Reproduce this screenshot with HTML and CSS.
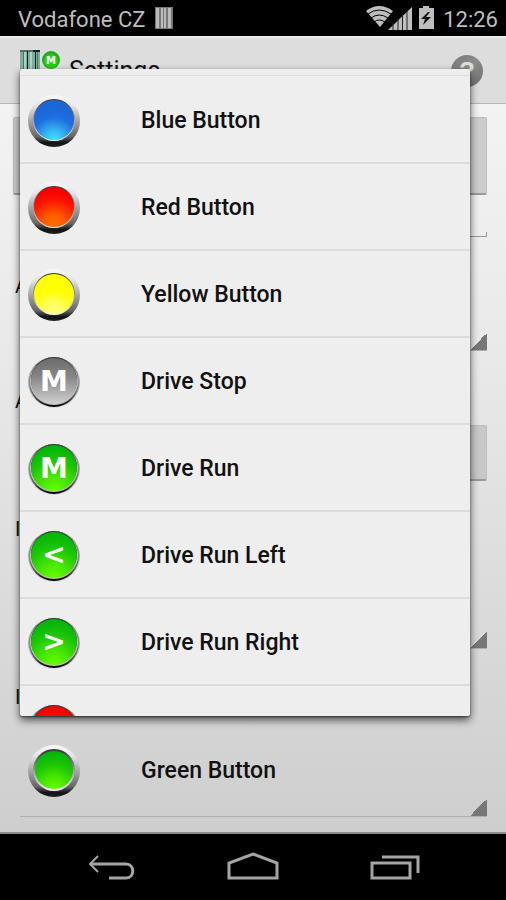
FILE: index.html
```html
<!DOCTYPE html>
<html lang="en">
<head>
<meta charset="utf-8">
<meta name="viewport" content="width=device-width, initial-scale=1">
<title>Settings</title>
<link rel="stylesheet" href="styles.css">
</head>
<body>
<svg class="defs" aria-hidden="true">
  <defs>
    <linearGradient id="rim" x1="0" y1="0" x2="0" y2="1">
      <stop offset="0" stop-color="#f8f8f8"/><stop offset=".2" stop-color="#e6e6e6"/><stop offset=".55" stop-color="#9a9a9a"/><stop offset=".8" stop-color="#666"/><stop offset=".92" stop-color="#111"/><stop offset="1" stop-color="#222"/>
    </linearGradient>
    <linearGradient id="bevel" x1="0" y1="0" x2="0" y2="1">
      <stop offset="0" stop-color="#333"/><stop offset=".5" stop-color="#999"/><stop offset="1" stop-color="#f4f4f4"/>
    </linearGradient>
    <linearGradient id="thin" x1="0" y1="0" x2="0" y2="1">
      <stop offset="0" stop-color="#eee"/><stop offset=".5" stop-color="#aaa"/><stop offset="1" stop-color="#ddd"/>
    </linearGradient>
    <linearGradient id="edge" x1="0" y1="0" x2="0" y2="1">
      <stop offset="0" stop-color="#222"/><stop offset=".5" stop-color="#888"/><stop offset=".8" stop-color="#555"/><stop offset="1" stop-color="#000"/>
    </linearGradient>
    <radialGradient id="blue" cx=".5" cy="1" r=".8">
      <stop offset="0" stop-color="#3fe0ff"/><stop offset=".25" stop-color="#38c0f5"/><stop offset=".7" stop-color="#1f6fe0"/><stop offset="1" stop-color="#1c66d8"/>
    </radialGradient>
    <radialGradient id="red" cx=".5" cy="1" r=".9">
      <stop offset="0" stop-color="#ff7200"/><stop offset=".35" stop-color="#ff5a00"/><stop offset=".75" stop-color="#fe1400"/><stop offset="1" stop-color="#fa0000"/>
    </radialGradient>
    <radialGradient id="yellow" cx=".5" cy="1" r=".8">
      <stop offset="0" stop-color="#ffff90"/><stop offset=".4" stop-color="#ffff50"/><stop offset=".75" stop-color="#ffff00"/><stop offset="1" stop-color="#ffff00"/>
    </radialGradient>
    <radialGradient id="green" cx=".5" cy="1" r="1">
      <stop offset="0" stop-color="#66ff00"/><stop offset=".3" stop-color="#4be800"/><stop offset=".65" stop-color="#1cc604"/><stop offset="1" stop-color="#00b20c"/>
    </radialGradient>
    <linearGradient id="gray" x1="0" y1="0" x2="0" y2="1">
      <stop offset="0" stop-color="#6c6c6c"/><stop offset=".4" stop-color="#858585"/><stop offset="1" stop-color="#d0d0d0"/>
    </linearGradient>
    <linearGradient id="help" x1="0" y1="0" x2="1" y2="1">
      <stop offset="0" stop-color="#777"/><stop offset=".5" stop-color="#8c8c8c"/><stop offset="1" stop-color="#6c6c6c"/>
    </linearGradient>
    <g id="push">
      <circle cx="27" cy="27" r="26" fill="url(#rim)"/>
      <circle cx="27" cy="26" r="21" fill="url(#bevel)"/>
    </g>
    <g id="flat">
      <circle cx="27" cy="27" r="26" fill="url(#thin)"/>
      <circle cx="27" cy="27" r="25" fill="url(#edge)"/>
      <circle cx="27" cy="26" r="24" fill="#c4c4c4"/>
      <circle cx="27" cy="25" r="23" fill="#333"/>
    </g>
  </defs>
</svg>

<div class="screen">
  <header class="status">
    <span>Vodafone CZ</span>
    <svg class="barcode" width="18" height="22" viewBox="0 0 18 22" aria-hidden="true">
      <path fill="#777" d="M0 0h18v22H0z"/><path fill="#bbb" d="M1 1h3v20H1zM6 1h2v20H6zM9 1h2v20H9zM13 1h3v20h-3z"/>
    </svg>
    <svg class="signals" width="70" height="26" viewBox="0 0 70 26" aria-hidden="true">
      <path fill="#bebebe" d="M0 6Q13-4 27 6L14 22z"/>
      <path fill="none" stroke="#000" stroke-width="1" d="M2 9q11-8 23 0M5 13q8-6 17 0M8 17q5-4 11 0"/>
      <path fill="#bebebe" d="M22 25 46 2v23z"/>
      <path stroke="#222" stroke-width="1" d="M27 25v-8M32 25V13M36.500 25V9M41 25V5"/>
      <path fill="#bebebe" d="M53 3h4V1h6v2h5v21H53z"/>
      <path fill="#111" d="m62 7-7 7h4l-2 6 8-8h-5l4-5z"/>
    </svg>
    <time>12:26</time>
  </header>

  <div class="actionbar">
    <svg width="44" height="48" viewBox="0 0 44 48" aria-hidden="true">
      <path fill="#7fae9c" d="M0 3h20v42H0z"/>
      <path fill="#4d7566" d="M0 3h20v2H0zM3 5h1v40H3zM17 5h1v40h-1z"/>
      <path fill="#a8d5c4" d="M4 5h2v40H4zM10 5h2v40h-2z"/>
      <path fill="#14211c" d="M7 4h1v41H7zM13 3h7v2h-4v40h-1V5h-2z"/>
      <circle cx="31" cy="13" r="9" fill="#21ad1b"/><circle cx="31" cy="14" r="7" fill="#25cf12"/>
      <text class="tiny-mark" x="31" y="17">M</text>
    </svg>
    <h1>Settings</h1>
    <button class="help" type="button" aria-label="Help">
      <svg width="32" height="32" viewBox="0 0 32 32"><circle cx="16" cy="16" r="16" fill="url(#help)"/><text class="help-mark" x="16" y="25">?</text></svg>
    </button>
  </div>

  <form class="form">
    <button class="bar tall" type="button" aria-label="Action"></button>
    <input class="field" type="text" aria-label="Value">
    <label for="s1">A</label>
    <select class="spinner first" id="s1"></select>
    <label for="b2">A</label>
    <button class="bar inset" id="b2" type="button"></button>
    <label class="lower" for="s2">I</label>
    <select class="spinner second" id="s2"></select>
    <label for="s3">I</label>
    <div class="choice">
      <svg class="icon" viewBox="0 0 54 54" aria-hidden="true"><use href="#push"/><circle cx="27" cy="26" r="19" fill="url(#green)"/></svg>
      <select class="choice-select" id="s3"><option>Green Button</option></select>
    </div>
  </form>

  <nav class="navbar" aria-label="System">
    <button type="button" aria-label="Back"><svg width="54" height="32" viewBox="0 0 54 32"><path d="M6 12h36c9 0 9 14 0 14H25" stroke-width="3"/><path d="m14 4-8 8 8 8" stroke-width="2"/></svg></button>
    <button type="button" aria-label="Home"><svg width="54" height="32" viewBox="0 0 54 32"><path d="M3 26V11l24-9 24 9v15z" stroke-width="3"/></svg></button>
    <button type="button" aria-label="Recent apps"><svg width="54" height="32" viewBox="0 0 54 32"><path d="M4 11h38v15H4zM14 5h36v16" stroke-width="3"/></svg></button>
  </nav>

  <div class="popup" role="listbox" aria-label="Button type">
    <button class="row" type="button" role="option"><svg class="icon" viewBox="0 0 54 54"><use href="#push"/><circle cx="27" cy="26" r="20" fill="url(#blue)"/></svg>Blue Button</button>
    <button class="row" type="button" role="option"><svg class="icon" viewBox="0 0 54 54"><use href="#push"/><circle cx="27" cy="26" r="20" fill="url(#red)"/></svg>Red Button</button>
    <button class="row" type="button" role="option"><svg class="icon" viewBox="0 0 54 54"><use href="#push"/><circle cx="27" cy="26" r="20" fill="url(#yellow)"/></svg>Yellow Button</button>
    <button class="row" type="button" role="option"><svg class="icon" viewBox="0 0 54 54"><use href="#flat"/><circle cx="27" cy="26" r="23" fill="url(#gray)"/><text class="mark" x="27" y="36">M</text></svg>Drive Stop</button>
    <button class="row" type="button" role="option"><svg class="icon" viewBox="0 0 54 54"><use href="#flat"/><circle cx="27" cy="26" r="23" fill="url(#green)"/><text class="mark" x="27" y="36">M</text></svg>Drive Run</button>
    <button class="row" type="button" role="option"><svg class="icon" viewBox="0 0 54 54"><use href="#flat"/><circle cx="27" cy="26" r="23" fill="url(#green)"/><text class="mark" x="27" y="35">&lt;</text></svg>Drive Run Left</button>
    <button class="row" type="button" role="option"><svg class="icon" viewBox="0 0 54 54"><use href="#flat"/><circle cx="27" cy="26" r="23" fill="url(#green)"/><text class="mark" x="27" y="35">&gt;</text></svg>Drive Run Right</button>
    <button class="row" type="button" role="option" aria-label="Red drive"><svg class="icon" viewBox="0 0 54 54"><use href="#flat"/><circle cx="27" cy="26" r="23" fill="url(#red)"/></svg></button>
  </div>
</div>
</body>
</html>
```
FILE: styles.css
```css
* { box-sizing: border-box; }

body {
  margin: 0;
  font-family: Roboto, "Liberation Sans", sans-serif;
  color: #111;
}

button, select, input { font: inherit; color: inherit; border: 0; padding: 0; border-radius: 0; }
svg { display: block; flex: none; }
.defs { position: absolute; width: 0; height: 0; }

.screen {
  position: relative;
  display: flex;
  flex-direction: column;
  min-height: 100vh;
  background: #000;
}

.status {
  display: flex;
  align-items: center;
  height: 36px;
  padding: 0 8px 0 18px;
  color: #bebebe;
  font-size: 22px;
}
.status span, .status time { padding-top: 2px; }
.barcode { margin-left: 10px; }
.signals { margin-left: auto; margin-right: 7px; }

.actionbar {
  display: flex;
  align-items: center;
  height: 68px;
  padding: 0 23px 0 20px;
  background: #ddd;
  border-top: 2px solid #ececec;
  border-bottom: 1px solid #b5b5b5;
}
.actionbar h1 { margin: 0 auto 0 5px; font-size: 25px; font-weight: 400; }
.help { background: none; }

.form {
  flex: 1;
  display: flex;
  flex-direction: column;
  padding: 13px 19px 15px 13px;
  background: linear-gradient(#f3f3f3, #e9e9e9 35%, #cecece);
  border-bottom: 2px solid #8c8c8c;
}
.form label { height: 24px; padding-left: 2px; font-size: 20px; line-height: 24px; }
.bar {
  height: 56px;
  background: #c8c8c8;
  border: 1px solid #bebebe;
  border-bottom: 2px solid #999;
  border-radius: 2px;
}
.bar.tall { height: 78px; background: #ccc; }
.bar.inset { margin: 12px 0 0 7px; }
.field {
  height: 5px;
  margin: 37px 0 37px 7px;
  background: none;
  border: solid #999;
  border-width: 0 1px 1px;
}
.spinner, .choice {
  border-bottom: 1px solid #b0b0b0;
  background: linear-gradient(135deg, transparent 50%, #777 50%) right bottom / 17px 17px no-repeat;
}
.spinner { appearance: none; margin-left: 7px; }
.first { height: 53px; margin-bottom: 38px; }
.form .lower { margin-top: 36px; }
.second { height: 108px; margin-bottom: 36px; }
.choice {
  display: flex;
  align-items: center;
  gap: 60px;
  height: 94px;
  margin: 14px 0 0 7px;
  padding: 2px 0 0 7px;
}
.choice-select { appearance: none; flex: 1; background: none; font-size: 23px; font-weight: 500; }
.icon { width: 54px; height: 54px; }

.navbar {
  display: flex;
  align-items: center;
  justify-content: space-between;
  height: 66px;
  padding: 2px 84px 0 84px;
}
.navbar button { background: none; }
.navbar svg { fill: none; stroke: #a5a5a5; }

.popup {
  position: absolute;
  top: 69px;
  right: 36px;
  bottom: 184px;
  left: 20px;
  overflow: hidden;
  padding-top: 8px;
  background: linear-gradient(#ddd, #ddd) 0 6px / 100% 1px no-repeat #eee;
  border-radius: 2px;
  box-shadow: 0 4px 8px rgba(0, 0, 0, .65), 0 1px 2px rgba(0, 0, 0, .5);
}
.row {
  display: flex;
  align-items: center;
  gap: 60px;
  width: 100%;
  height: 87px;
  padding: 2px 0 0 7px;
  background: none;
  border-bottom: 2px solid #dcdcdc;
  font-size: 23px;
  font-weight: 500;
  text-align: left;
}

.mark { font: bold 28px "DejaVu Sans", sans-serif; fill: #fff; text-anchor: middle; }
.tiny-mark { font: bold 10px "DejaVu Sans", sans-serif; fill: #fff; text-anchor: middle; }
.help-mark { font: bold 26px "Liberation Sans", sans-serif; fill: #ddd; text-anchor: middle; }
```
